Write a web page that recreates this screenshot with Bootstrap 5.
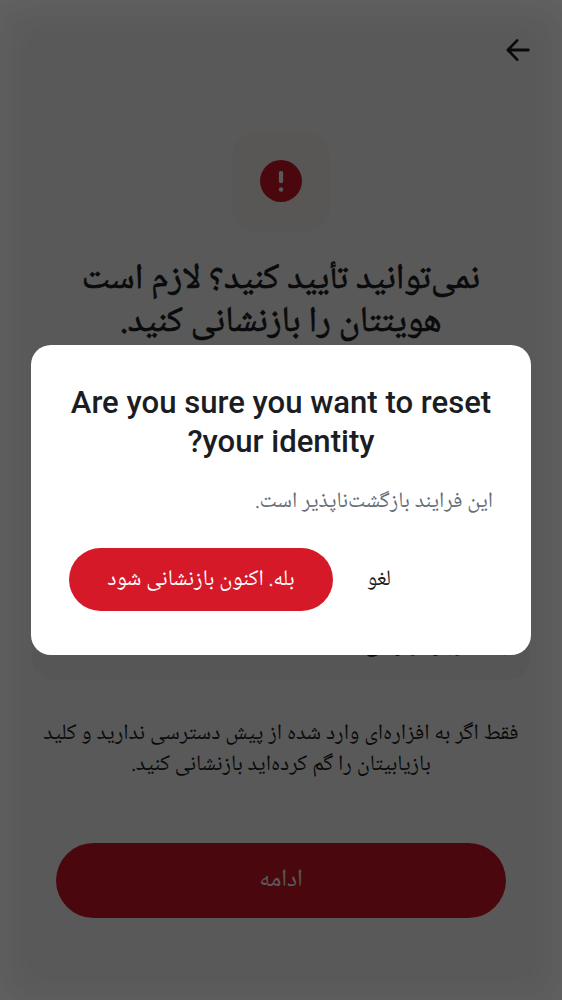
<!DOCTYPE html>
<html lang="fa" dir="rtl">
<head>
<meta charset="utf-8">
<meta name="viewport" content="width=device-width, initial-scale=1">
<title>بازنشانی هویت</title>
<link href="https://cdn.jsdelivr.net/npm/bootstrap@5.3.0/dist/css/bootstrap.min.css" rel="stylesheet">
<style>
  body { font-family: "Noto Naskh Arabic UI", "Noto Naskh Arabic", "Noto Sans Arabic", "Noto Sans", sans-serif; color: #1b1d22; background: #fff; }
  .screen { height: 1000px; padding: 0 32px; }
  .top-bar { height: 100px; }
  .hero-icon { width: 98px; height: 100px; margin-top: 32px; padding-bottom: 2px; border-radius: 24px; background: #fdf9f4; }
  .screen-title { font-size: 35.8px; line-height: 43px; font-weight: 400; -webkit-text-stroke: .7px #1b1d22; margin-top: 26px; }
  .info-card { height: 331px; margin-top: 5px; border-radius: 22px; background: #f5f5f5; padding: 0 23px 20px; font-size: 22.1px; line-height: 30px; }
  .hint { font-size: 22.15px; line-height: 31px; margin-top: 38px; }
  .btn-critical { background: #d51928; color: #fff; }
  .btn-continue { width: 450px; height: 75px; font-size: 24.3px; margin-top: 63px; padding-bottom: 7px; }
  .scrim { background: rgba(0,0,0,.65); box-shadow: inset 0 6px 36px rgba(255,255,255,.06); }
  .confirm { width: 500px; height: 310px; border-radius: 20px; padding: 38px 38px 44px; }
  .confirm-title { font-family: Roboto, sans-serif; font-size: 31.1px; line-height: 39px; font-weight: 500; }
  .confirm-text { font-size: 22px; line-height: 30px; margin-top: 25px; color: #656d77; }
  .btn-reset { width: 264px; height: 63px; font-size: 22.2px; }
  .btn-cancel { font-size: 22px; color: #1b1d22; width: 92px; height: 63px; padding: 0; }
</style>
</head>
<body class="overflow-hidden">
<main class="screen d-flex flex-column align-items-center text-center">
  <header class="top-bar w-100 d-flex align-items-center">
    <svg width="25" height="24" viewBox="0 0 25 24" fill="none" stroke="#1b1d22" stroke-width="2.8" stroke-linecap="round" stroke-linejoin="round"><path d="M12.2 2.4 2.9 12l9.3 9.6M3.4 12h19.9"/></svg>
  </header>
  <div class="hero-icon flex-shrink-0 d-flex align-items-center justify-content-center">
    <svg width="42" height="42" viewBox="0 0 42 42"><circle cx="21" cy="21" r="21" fill="#d51928"/><rect x="18.9" y="11" width="4.2" height="12" rx="1.6" fill="#fff"/><circle cx="21" cy="29.5" r="2.2" fill="#fff"/></svg>
  </div>
  <h1 class="screen-title text-nowrap mb-0">نمی‌توانید تأیید کنید؟ لازم است<br>هویتتان را بازنشانی کنید.</h1>
  <section class="info-card flex-shrink-0 w-100 d-flex align-items-end">
    <p class="mb-0 text-nowrap">باید دوباره وارسی کنید</p>
  </section>
  <p class="hint text-nowrap mb-0">فقط اگر به افزاره‌ای وارد شده از پیش دسترسی ندارید و کلید<br>بازیابیتان را گم کرده‌اید بازنشانی کنید.</p>
  <button class="btn btn-critical btn-continue rounded-pill border-0">ادامه</button>
</main>
<div class="scrim position-fixed top-0 start-0 w-100 h-100 d-flex align-items-center justify-content-center">
  <div class="confirm bg-white d-flex flex-column" role="dialog" aria-modal="true">
    <h2 class="confirm-title text-center text-nowrap mb-0">Are you sure you want to reset<br>your identity?</h2>
    <p class="confirm-text mb-0">این فرایند بازگشت‌ناپذیر است.</p>
    <div class="d-flex justify-content-end align-items-center mt-auto">
      <button class="btn btn-cancel">لغو</button>
      <button class="btn btn-critical btn-reset rounded-pill border-0 text-nowrap">بله. اکنون بازنشانی شود</button>
    </div>
  </div>
</div>
<script src="https://cdn.jsdelivr.net/npm/bootstrap@5.3.0/dist/js/bootstrap.bundle.min.js"></script>
</body>
</html>
